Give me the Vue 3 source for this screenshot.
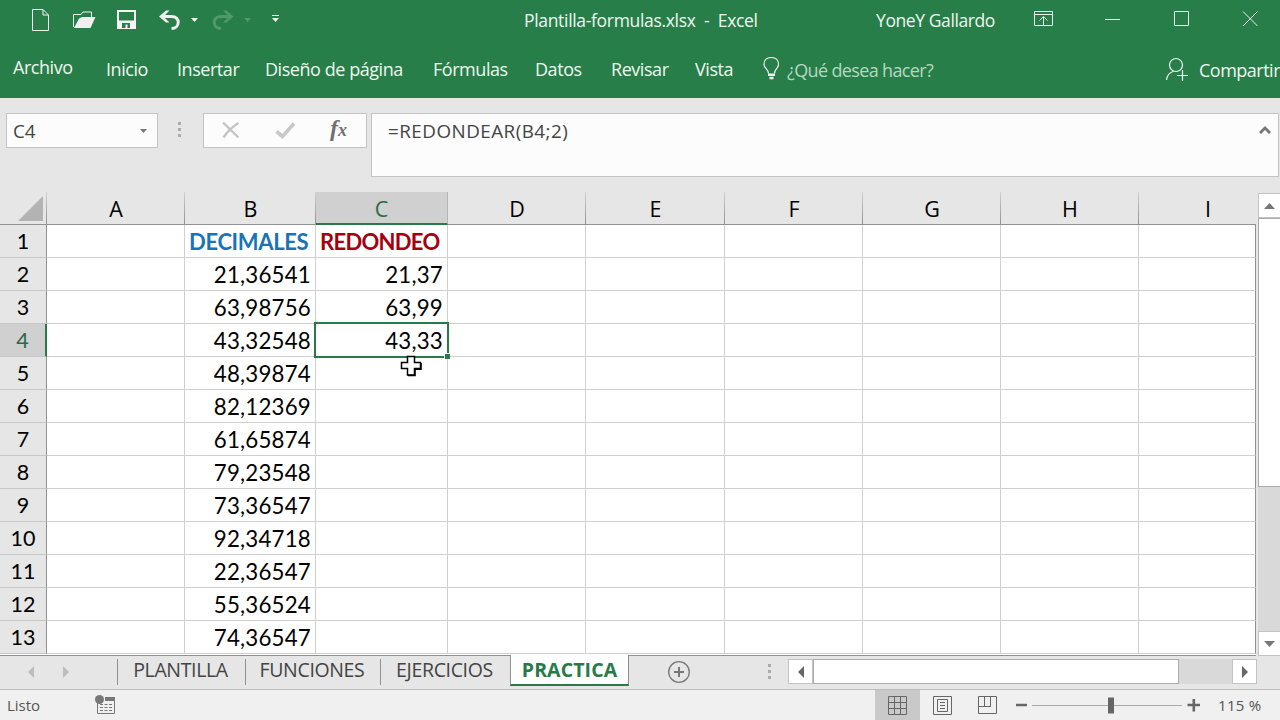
<template>
  <div class="excel">
    <header class="title-bar">
      <svg width="36" height="40" viewBox="28 0 36 40" fill="none" stroke="#eef7f0">
        <path d="M32.5 9.5H43L48.500 15V30.500H32.500ZM43 9.500V15H48.500" />
      </svg>
      <svg width="44" height="40" viewBox="64 0 44 40">
        <path d="M73.500 27V14.500H81L83 12H91.500V18" fill="none" stroke="#eef7f0" />
        <path d="M79 18.500 82 17H95.500L90.500 28H74Z" fill="#f0f0f0" />
      </svg>
      <svg width="42" height="40" viewBox="108 0 42 40">
        <path d="M118 11H135V28H118Z" fill="none" stroke="#f4f4f4" stroke-width="2" />
        <path d="M118 20.500H135V28.500H118Z" fill="#f4f4f4" />
        <path d="M122 23H130V28H127.500V24.500H125.500V28H122Z" fill="#287e49" />
      </svg>
      <svg width="54" height="40" viewBox="150 0 54 40">
        <path d="M162 16.500H171.500C181 16.500 180 28.500 171.500 28.500" fill="none" stroke="#f0f0f0" stroke-width="3" />
        <path d="M159 16.500 166 10.500H169.500L163.500 16.500 169.500 22.500H166Z" fill="#f0f0f0" />
        <path d="M191 18H198L194.500 22Z" fill="#f4f4f4" />
      </svg>
      <svg width="56" height="40" viewBox="204 0 56 40">
        <path d="M230 16.500H221C211.500 16.500 212.500 28.500 221 28.500" fill="none" stroke="#4f996b" stroke-width="3" />
        <path d="M233.500 16.500 226.500 10.500H223L229 16.500 223 22.500H226.500Z" fill="#4f996b" />
        <path d="M244 18H251L247.500 22Z" fill="#4f996b" />
      </svg>
      <svg width="30" height="40" viewBox="260 0 30 40" fill="#f4f4f4">
        <path d="M272 15H279V16H272ZM272 18H279L275.500 22Z" />
      </svg>
      <span class="file-name">Plantilla-formulas.xlsx&nbsp; -&nbsp; Excel</span>
      <span class="user-name">YoneY Gallardo</span>
      <svg class="window-buttons" width="260" height="40" viewBox="1020 0 260 40" fill="none" stroke="#e6f3e9">
        <path d="M1034.500 11.500H1052.500V25.500H1034.500ZM1034 14.500H1053M1043.500 25V17M1039.500 20.500 1043.500 16.500 1047.500 20.500" />
        <path d="M1105 19.500H1120M1174.500 11.500H1188.500V25.500H1174.500ZM1243 11.500 1257.500 26M1257.500 11.500 1243 26" />
      </svg>
    </header>

    <nav class="ribbon">
      <span v-for="tab in ribbonTabs" :key="tab" class="ribbon-tab">{{ tab }}</span>
      <svg width="24" height="40" viewBox="761 50 24 40" fill="none" stroke="#eef7f0" stroke-width="1.2">
        <path d="M768.500 73.500C768.500 69 764 68.500 764 64.500C764 60 767 57.500 771.200 57.500C775.500 57.500 778.500 60 778.500 64.500C778.500 68.500 774.500 69 774.500 73.500" />
        <path d="M768 74.800H775M769.500 78H773.500" stroke-width="2.400" />
      </svg>
      <span class="tell-me">¿Qué desea hacer?</span>
      <svg width="36" height="40" viewBox="1163 50 36 40" fill="none" stroke="#eef7f0" stroke-width="1.200">
        <circle cx="1176" cy="65" r="6.500" />
        <path d="M1166.500 80C1167 75 1169.500 72.500 1173.500 71.200M1177 75.500H1188M1182.500 70V81" />
      </svg>
      <span class="share">Compartir</span>
    </nav>

    <section class="formula-bar">
      <div class="name-box">
        <span>C4</span>
        <svg width="7" height="4" viewBox="0 0 7 4"><path d="M0 0H7L3.500 4Z" fill="#777" /></svg>
      </div>
      <div class="dots"><i /><i /><i /></div>
      <div class="formula-buttons">
        <svg width="163" height="33" viewBox="204 114 163 33">
          <path d="M223 122.500 238.500 137.500M238.500 123C232 127 227 132 223.500 137.500" fill="none" stroke="#c4c4c4" stroke-width="2.400" />
          <path d="M276.500 131.500 282.500 136.500 294 123.500" fill="none" stroke="#c8c8c8" stroke-width="3.600" />
          <text x="330" y="136" class="fx">f<tspan dx="0" font-size="18">x</tspan></text>
        </svg>
      </div>
      <div class="formula-input">
        <span>=REDONDEAR(B4;2)</span>
        <svg width="12" height="8" viewBox="0 0 12 8"><path d="M1 7 6 2 11 7" fill="none" stroke="#777" stroke-width="2.800" /></svg>
      </div>
    </section>

    <main class="workspace">
      <div class="sheet">
        <div class="sheet-row column-heads">
          <div class="corner">
            <svg width="25" height="25" viewBox="0 0 25 25"><path d="M25 0V25H0Z" fill="#b3b3b3" /></svg>
          </div>
          <div v-for="col in columns" :key="col" :class="['column-head', { active: col === 'C' }]">{{ col }}</div>
        </div>
        <div v-for="(row, index) in rows" :key="index" class="sheet-row">
          <div :class="['row-head', { active: index === 3 }]">{{ index + 1 }}</div>
          <div
            v-for="col in columns"
            :key="col"
            :class="['cell', { heading: index === 0, red: col === 'C', selected: index === 3 && col === 'C' }]"
          >{{ row[col] }}</div>
        </div>
        <svg class="pointer" width="22" height="22" viewBox="0 0 22 22">
          <path d="M7.500 1.500H14.500V7.500H20.500V13.500H14.500V20H7.500V13.500H1.500V7.500H7.500Z" fill="#fff" stroke="#000" stroke-width="1.500" />
          <path d="M8 20.500H15V14.500M15 14.300H21V8" fill="none" stroke="#000" stroke-width="1.500" />
        </svg>
      </div>
      <div class="scroll-y">
        <div class="scroll-button"><svg width="11" height="6" viewBox="0 0 11 6"><path d="M0 6 5.500 0 11 6Z" fill="#777" /></svg></div>
        <div class="thumb-y" />
        <div class="scroll-button down"><svg width="11" height="6" viewBox="0 0 11 6"><path d="M0 0H11L5.500 6Z" fill="#777" /></svg></div>
      </div>
    </main>

    <section class="tab-bar">
      <svg class="tab-arrows" width="117" height="33" viewBox="0 656 117 33" fill="#bdbdbd">
        <path d="M34 666V678L28 672ZM63 666V678L69 672Z" />
      </svg>
      <div v-for="tab in sheetTabs" :key="tab" :class="['sheet-tab', { current: tab === 'PRACTICA' }]">{{ tab }}</div>
      <svg class="add-sheet" width="24" height="24" viewBox="0 0 24 24" fill="none" stroke="#777">
        <circle cx="12" cy="12" r="10.300" stroke-width="1.300" />
        <path d="M7 12H17M12 7V17" stroke-width="2" />
      </svg>
      <div class="dots small"><i /><i /><i /></div>
      <div class="scroll-x">
        <div class="arrow-x"><svg width="6" height="12" viewBox="0 0 6 12"><path d="M6 0V12L0 6Z" fill="#666" /></svg></div>
        <div class="thumb-x" />
        <div class="arrow-x right"><svg width="6" height="12" viewBox="0 0 6 12"><path d="M0 0V12L6 6Z" fill="#666" /></svg></div>
      </div>
    </section>

    <footer class="status-bar">
      <span class="status">Listo</span>
      <svg width="24" height="30" viewBox="93 690 24 30">
        <path d="M97.500 700V713.500H114.500V698" fill="none" stroke="#777" />
        <path d="M105 697H115V701H105Z" fill="#777" />
        <circle cx="99.500" cy="699.500" r="4.500" fill="#777" />
        <path d="M100 704.500H112M100 707.500H112M100 710.500H112" stroke="#777" stroke-dasharray="3 1.500" />
      </svg>
      <div class="views">
        <div class="view active">
          <svg width="19" height="19" viewBox="0 0 19 19" fill="none" stroke="#666"><path d="M.5.500H18.500V18.500H.5ZM6.500 0V19M12.500 0V19M0 6.500H19M0 12.500H19" /></svg>
        </div>
        <div class="view">
          <svg width="19" height="19" viewBox="0 0 19 19" fill="none" stroke="#666"><path d="M.5.500H18.500V18.500H.5ZM4.500 3.500H14.500V15.500H4.500ZM7 6.500H12M7 9.500H12M7 12.500H12" /></svg>
        </div>
        <div class="view">
          <svg width="19" height="19" viewBox="0 0 19 19" fill="none" stroke="#666"><path d="M.5.500H18.500V17.500H.5ZM6.500 0V10.500M12.500 0V10.500M0 10.500H13" /></svg>
        </div>
      </div>
      <svg class="zoom" width="200" height="30" viewBox="1010 690 200 30">
        <path d="M1032 705.500H1182" stroke="#aaa" />
        <path d="M1016 705H1027M1187.500 705H1200M1193.800 699V711.500" stroke="#666" stroke-width="2.600" />
        <path d="M1108 697.500H1114V713.500H1108Z" fill="#666" />
      </svg>
      <span class="percent">115 %</span>
    </footer>
  </div>
</template>

<script setup>
const ribbonTabs = ['Archivo', 'Inicio', 'Insertar', 'Diseño de página', 'Fórmulas', 'Datos', 'Revisar', 'Vista']
const columns = ['A', 'B', 'C', 'D', 'E', 'F', 'G', 'H', 'I']
const sheetTabs = ['PLANTILLA', 'FUNCIONES', 'EJERCICIOS', 'PRACTICA']

const rows = [
  { B: 'DECIMALES', C: 'REDONDEO' },
  { B: '21,36541', C: '21,37' },
  { B: '63,98756', C: '63,99' },
  { B: '43,32548', C: '43,33' },
  { B: '48,39874' },
  { B: '82,12369' },
  { B: '61,65874' },
  { B: '79,23548' },
  { B: '73,36547' },
  { B: '92,34718' },
  { B: '22,36547' },
  { B: '55,36524' },
  { B: '74,36547' }
]
</script>

<style>
body {
  margin: 0;
  overflow: hidden;
}
</style>

<style scoped>
.excel {
  width: 1280px;
  height: 720px;
  display: flex;
  flex-direction: column;
  overflow: hidden;
  background: #e6e6e6;
  font-family: "Open Sans", "Noto Sans", sans-serif;
  white-space: nowrap;
}

.excel * {
  box-sizing: border-box;
}

svg {
  display: block;
  flex: none;
}

.title-bar {
  height: 40px;
  padding-left: 28px;
  display: flex;
  background: #287e49;
  color: #eef8f0;
  font-size: 17.500px;
  letter-spacing: -0.320px;
  line-height: 40px;
}

.file-name {
  width: 352px;
  margin-left: 234px;
}

.user-name {
  width: 144px;
  letter-spacing: -0.400px;
}

.ribbon {
  height: 58px;
  padding-left: 13px;
  display: grid;
  grid-template-columns: 93px 71px 88px 168px 102px 76px 84px 66px 26px 376px 36px 82px;
  background: #287e49;
  color: #eef8f0;
  font-size: 18px;
  letter-spacing: -0.450px;
  line-height: 58px;
}

.ribbon svg {
  margin-top: 10px;
}

.ribbon-tab:first-child {
  line-height: 54px;
}

.tell-me {
  color: #b5d9bf;
  letter-spacing: -0.640px;
  line-height: 60px;
}

.share {
  letter-spacing: -0.500px;
  line-height: 60px;
}

.formula-bar {
  height: 94px;
  padding: 15px 1px 0 6px;
  display: flex;
  align-items: flex-start;
  color: #444;
  font-size: 18.800px;
}

.name-box {
  width: 152px;
  height: 35px;
  padding: 0 10px 0 6px;
  display: flex;
  align-items: center;
  justify-content: space-between;
  background: #fcfcfc;
  border: 1px solid #c3c3c3;
}

.dots {
  width: 43px;
  margin-right: 2px;
  padding-top: 9px;
  display: flex;
  flex-direction: column;
  align-items: center;
  gap: 3px;
}

.dots i {
  width: 3px;
  height: 3px;
  background: #ababab;
}

.formula-buttons {
  width: 164px;
  height: 35px;
  background: #fcfcfc;
  border: 1px solid #c3c3c3;
}

.fx {
  font: italic bold 24px "Liberation Serif", serif;
  fill: #707070;
}

.formula-input {
  flex: 1;
  height: 64px;
  margin-left: 4px;
  padding: 0 7px 0 16px;
  display: flex;
  justify-content: space-between;
  letter-spacing: 0.500px;
  line-height: 34px;
  background: #fcfcfc;
  border: 1px solid #c3c3c3;
}

.formula-input svg {
  margin-top: 12px;
}

.workspace {
  height: 464px;
  display: flex;
}

.sheet {
  position: relative;
  width: 1256px;
  height: 464px;
  overflow: hidden;
  border-bottom: 1px solid #919191;
  background: #fff;
}

.sheet-row {
  height: 33px;
  display: grid;
  grid-template-rows: 33px;
  grid-template-columns: 47px 138px 131px 132px 138px 139px 138px 138px 138px 117px;
}

.column-heads {
  background: #e6e6e6;
}

.corner,
.column-head {
  background: linear-gradient(#d0d0d0, #919191) right / 1px 100% no-repeat;
  border-bottom: 1px solid #919191;
}

.corner {
  padding: 4px 0 0 18px;
}

.column-head {
  text-align: center;
  font-size: 21.500px;
  line-height: 34px;
}

.column-head:last-child {
  padding-left: 21px;
  background: none;
}

.column-head.active {
  background: #d0d0d0;
  color: #2a6a44;
  border-right: 1px solid #b5b5b5;
  border-bottom: 2px solid #287b48;
}

.row-head {
  background: #e6e6e6;
  border-right: 1px solid #919191;
  border-bottom: 1px solid #c6c6c6;
  text-align: center;
  font-family: Lato, "Open Sans", sans-serif;
  font-size: 21.500px;
  line-height: 33px;
}

.row-head.active {
  background: #d0d0d0;
  color: #2a6a44;
  border-right: 2px solid #287b48;
}

.cell {
  position: relative;
  padding-right: 4px;
  border-right: 1px solid #d0d0d0;
  border-bottom: 1px solid #d0d0d0;
  text-align: right;
  font-family: Lato, "Open Sans", sans-serif;
  font-size: 22.300px;
  letter-spacing: 0.200px;
  line-height: 34px;
}

.cell:last-child {
  border-right-color: #919191;
}

.cell.heading {
  padding: 0 0 0 4px;
  color: #1873b8;
  text-align: left;
  font-size: 22px;
  font-weight: bold;
  letter-spacing: -0.330px;
}

.cell.heading.red {
  color: #a60010;
  letter-spacing: -0.700px;
}

.cell.selected {
  z-index: 1;
}

.cell.selected::before {
  content: "";
  position: absolute;
  inset: -2px;
  border: 2px solid #287b48;
}

.cell.selected::after {
  content: "";
  position: absolute;
  right: -3px;
  bottom: -3px;
  width: 5px;
  height: 5px;
  background: #287b48;
  border: solid #fff;
  border-width: 1px 0 0 1px;
}

.pointer {
  position: absolute;
  left: 400px;
  top: 163px;
  z-index: 2;
}

.scroll-y {
  width: 22px;
  margin-left: 2px;
  padding-top: 1px;
  display: flex;
  flex-direction: column;
  background: linear-gradient(#d9d9d9, #d9d9d9) 0 20px no-repeat;
}

.scroll-button {
  height: 25px;
  display: flex;
  align-items: center;
  justify-content: center;
  background: #fff;
  border: 1px solid #c3c3c3;
  border-right: 0;
}

.thumb-y {
  height: 269px;
  background: #fff;
  border: 1px solid #ababab;
  border-right: 0;
}

.scroll-button.down {
  margin-top: auto;
}

.tab-bar {
  height: 34px;
  display: flex;
  border-bottom: 1px solid #bdbdbd;
  font-size: 19.500px;
  letter-spacing: -0.350px;
  color: #444;
}

.sheet-tab {
  height: 26px;
  margin-top: 3px;
  padding-right: 2px;
  border-left: 1px solid #919191;
  text-align: center;
  line-height: 22px;
}

.sheet-tab:nth-of-type(1) { width: 128px; }
.sheet-tab:nth-of-type(2) { width: 135px; }
.sheet-tab:nth-of-type(3) { width: 130px; }

.sheet-tab.current {
  width: 119px;
  height: 31px;
  margin-top: -1px;
  padding-right: 0;
  z-index: 1;
  background: #fff;
  color: #287b48;
  border-right: 1px solid #919191;
  border-bottom: 2px solid #287b48;
  font-weight: bold;
  letter-spacing: 0.100px;
  line-height: 30px;
}

.add-sheet {
  margin: 4px 0 0 38px;
}

.dots.small {
  width: 10px;
  margin: 0 0 0 73px;
  padding-top: 8px;
}

.scroll-x {
  width: 469px;
  height: 25px;
  margin: 3px 0 0 14px;
  display: flex;
  background: #d9d9d9;
}

.arrow-x {
  width: 25px;
  display: flex;
  align-items: center;
  justify-content: center;
  background: #fff;
  border: 1px solid #c3c3c3;
}

.thumb-x {
  width: 366px;
  background: #fff;
  border: 1px solid #ababab;
}

.arrow-x.right {
  margin-left: auto;
}

.status-bar {
  height: 30px;
  display: flex;
  background: #f0f0f0;
  color: #555;
  font-size: 15px;
  line-height: 31px;
}

.status {
  width: 93px;
  padding-left: 7px;
}

.views {
  margin-left: 758px;
  display: flex;
}

.view {
  width: 45px;
  padding-top: 6px;
  display: flex;
  justify-content: center;
}

.view.active {
  background: #c9c9c9;
}

.percent {
  margin-left: 8px;
  letter-spacing: 0.300px;
}
</style>
